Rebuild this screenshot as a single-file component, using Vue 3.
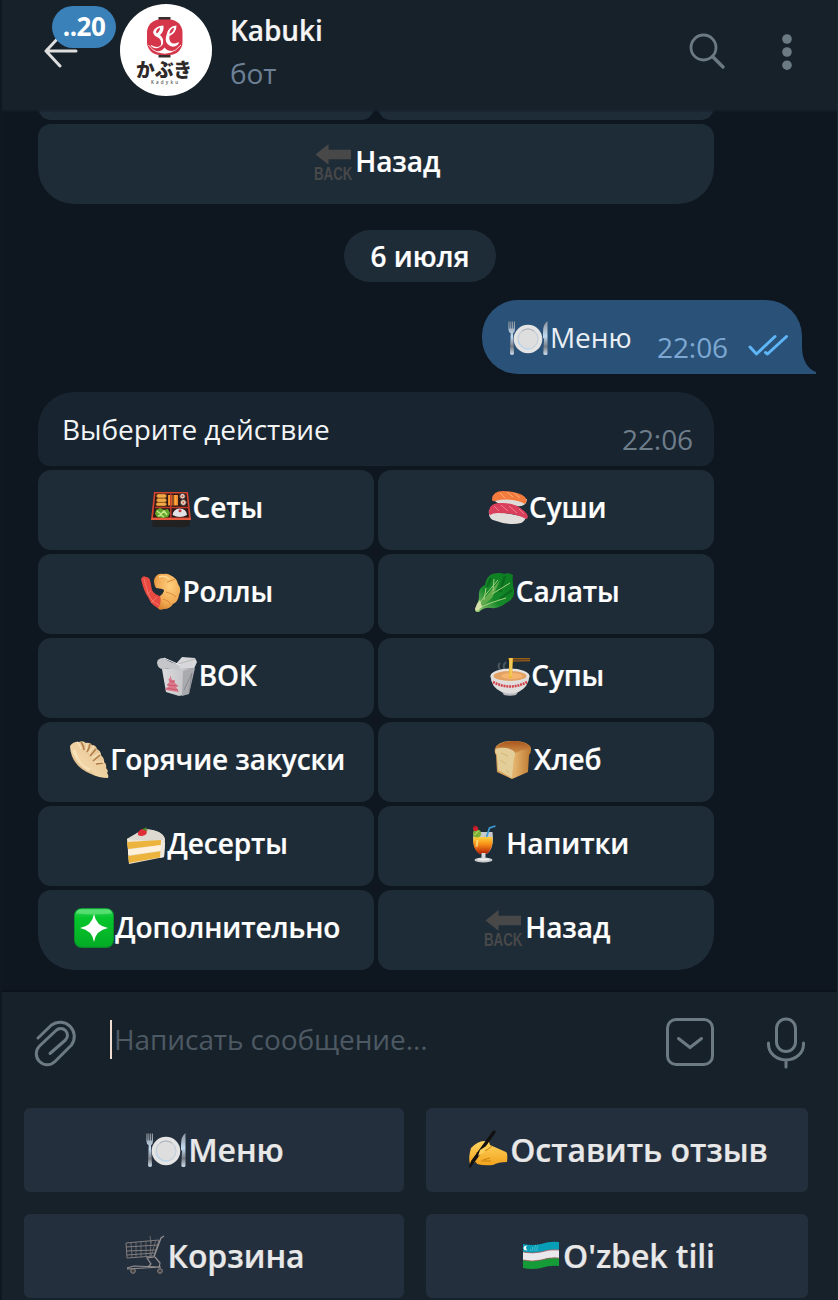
<script setup>
const menu = [
  { icon: 'bento', text: 'Сеты' },
  { icon: 'sushi', text: 'Суши' },
  { icon: 'shrimp', text: 'Роллы' },
  { icon: 'leaf', text: 'Салаты' },
  { icon: 'takeout', text: 'ВОК' },
  { icon: 'noodles', text: 'Супы' },
  { icon: 'dumpling', text: 'Горячие закуски' },
  { icon: 'bread', text: 'Хлеб' },
  { icon: 'cake', text: 'Десерты' },
  { icon: 'drink', text: 'Напитки' },
  { icon: 'sparkle', text: 'Дополнительно' },
  { icon: 'back', text: 'Назад' }
]
const keyboard = [
  { icon: 'plate', text: 'Меню' },
  { icon: 'writing', text: 'Оставить отзыв' },
  { icon: 'cart', text: 'Корзина' },
  { icon: 'flag', text: "O'zbek tili" }
]
</script>

<template>
  <div class="app">
    <svg class="sprite" aria-hidden="true">
      <defs>
        <linearGradient id="gGreen" x1="0" y1="0" x2="0" y2="1"><stop offset="0" stop-color="#35d35a" /><stop offset=".25" stop-color="#05c52c" /><stop offset="1" stop-color="#04ac25" /></linearGradient>
        <linearGradient id="gBread" x1="0" y1="0" x2="1" y2="0"><stop offset="0" stop-color="#d49a54" /><stop offset=".55" stop-color="#e3b26c" /><stop offset="1" stop-color="#bd7930" /></linearGradient>
        <linearGradient id="gCrust" x1="0" y1="0" x2="0" y2="1"><stop offset="0" stop-color="#a8561c" /><stop offset="1" stop-color="#cf8f4a" /></linearGradient>
        <linearGradient id="gDrink" x1="0" y1="0" x2="0" y2="1"><stop offset="0" stop-color="#ffd23c" /><stop offset=".45" stop-color="#f68b16" /><stop offset="1" stop-color="#b41e08" /></linearGradient>
        <linearGradient id="gHand" x1="0" y1="0" x2="0" y2="1"><stop offset="0" stop-color="#ffd560" /><stop offset="1" stop-color="#f2a31d" /></linearGradient>
        <linearGradient id="gLeaf" x1="1" y1="0" x2="0" y2="1"><stop offset="0" stop-color="#0a7a20" /><stop offset=".6" stop-color="#168a2a" /><stop offset="1" stop-color="#a5cf7c" /></linearGradient>
        <linearGradient id="gDump" x1="0" y1="1" x2="1" y2="0"><stop offset="0" stop-color="#b98850" /><stop offset=".4" stop-color="#f1d5a6" /><stop offset="1" stop-color="#e0bb8a" /></linearGradient>
        <linearGradient id="gSilver" x1="0" y1="0" x2="0" y2="1"><stop offset="0" stop-color="#8c9199" /><stop offset=".45" stop-color="#c3dbf0" /><stop offset=".75" stop-color="#777b82" /><stop offset="1" stop-color="#cfe0ee" /></linearGradient>
        <radialGradient id="gShrimp" cx=".6" cy=".35" r=".7"><stop offset="0" stop-color="#ffcf7e" /><stop offset=".7" stop-color="#f0a850" /><stop offset="1" stop-color="#d98630" /></radialGradient>
        <linearGradient id="gBox" x1="0" y1="0" x2="1" y2="0"><stop offset="0" stop-color="#dcdcde" /><stop offset=".68" stop-color="#c6c6c9" /><stop offset="1" stop-color="#97989b" /></linearGradient>
      </defs>

      <symbol id="plate" viewBox="0 0 40 40">
        <path d="M.4 4.500h1.100v7h.8v-7h1v7h.8v-7h1v7h.8v-7H7V12q0 3-2 4.300l1 20Q6 38 4 38t-2-1.700l.7-20Q.4 15 .4 12z" fill="url(#gSilver)" />
        <path d="M39.500 4Q35 7 35 16v5l1 .7-.7 14.800q0 1.500 2.200 1.500t2-1.500z" fill="url(#gSilver)" />
        <circle cx="20" cy="22" r="14.300" fill="#e4e4e4" />
        <circle cx="20" cy="22" r="10" fill="#dedede" stroke="#c3cedb" stroke-width="1.200" />
        <path d="M10.500 24a10 10 0 0 0 12 7.600" fill="none" stroke="#b8d9f7" stroke-width="1" />
        <path d="M14 14a10.500 10.500 0 0 1 12 0" fill="none" stroke="#aaa" stroke-width=".8" />
      </symbol>

      <symbol id="bento" viewBox="0 0 40 40">
        <path d="M1 31h38v7q-9 2-14 1H2q-1-3-1-8z" fill="#222122" />
        <path d="M3 4h34l3 28H0z" fill="#d4442e" />
        <path d="M4.500 5.500h31L38 29.500H2z" fill="#2c1918" />
        <g fill="#efa949" stroke="#925018" stroke-width=".6"><rect x="5.500" y="6" width="10" height="4" rx="2" /><rect x="5.500" y="10.300" width="10" height="4" rx="2" /><rect x="5" y="14.500" width="10.500" height="3.500" rx="1.700" /></g>
        <path d="M17 7h4.500v10.500H17zM22.500 7h4.500v10.500h-4.500z" fill="#f28a26" /><path d="M19 7v10M24.800 7v10" stroke="#ffc06a" stroke-width=".8" />
        <g fill="#e3d7cf" stroke="#4a3431" stroke-width="1"><circle cx="31.500" cy="8.200" r="2.800" /><circle cx="32.300" cy="14.500" r="3" /></g><g fill="#d45a36"><circle cx="31.500" cy="8.200" r="1" /><circle cx="32.300" cy="14.500" r="1" /></g>
        <path d="M4 19.500h34M19.800 6v24" stroke="#bd3b2b" stroke-width="1.500" />
        <path d="m5 22 4-2 4 2 4-1 2 4-2 4-5 1-6-1-2-3z" fill="#63a52d" /><path d="m6 23 4 3 3-3 3 4m-9 1 3-1 3 2" stroke="#c5e984" stroke-width="1.500" fill="none" />
        <path d="M21.500 27q1-6 7-6.500 7 0 7.500 6.500-7 4-14.500 0z" fill="#e2e2e6" /><circle cx="29" cy="22.800" r="1.500" fill="#c83b40" />
        <path d="M.3 31h39.400" stroke="#ef6245" stroke-width="1.300" />
      </symbol>

      <symbol id="sushi" viewBox="0 0 40 40">
        <path d="M5 9q2 9 18 8 12 3 15-2l1-4z" fill="#dfdcd7" />
        <path d="M4 11Q5 3 15 3q15 0 22 6 3 4 0 7-14-7-30-3-3 1-3-2z" fill="#f27b3d" />
        <path d="m12 5 5 5m2-6 6 5m1-4 6 5" stroke="#ffb175" stroke-width="1" />
        <path d="M1 22q-1 8 4 10 16 6 28 3 4-2 5-6z" fill="#e2dedb" />
        <path d="M1 26Q0 15 12 15q17-1 27 11 2 5-1 5-11-6-28-6-5 0-8 2z" fill="#da3f5b" />
        <path d="m6 18 5 5m2-6 7 6m1-5 8 7m2-4 5 5" stroke="#f27e92" stroke-width="1" />
      </symbol>

      <symbol id="shrimp" viewBox="0 0 40 40">
        <path d="M0 7Q2 3 5 5q3 0 4 3l2 10q2 5 11 7l-2 12q-9-2-13-12Q3 20 0 7z" fill="#e84a42" />
        <path d="m3 7 4 14q3 9 11 12M10 19l-4 3m10 3-6 6" fill="none" stroke="#f57466" stroke-width="1" />
        <path d="M15 4q3-3 7-2 4-1 7 1 7 3 8 9 4 5 1 11-1 7-6 9-3 5-9 5-5 2-6-1 4-5 2-12 3-2 4-5 1-2-8-3-4-7 0-12z" fill="url(#gShrimp)" />
        <path d="M25 20q6 1 10 5M26 10q4-1 8-3M22 27q6 1 8 6" fill="none" stroke="#d78838" stroke-width=".9" />
        <path d="M18 5q6-2 10 2" fill="none" stroke="#ffdb9c" stroke-width="1.500" />
      </symbol>

      <symbol id="leaf" viewBox="0 0 40 40">
        <path d="M1 37Q5 29 5 24q-1-8 6-11 1-8 7-11 9-2 12 0 5-2 9 1-1 8 1 15 1 9-8 13-7 6-15 5-7-1-12 4-4 1-4-3z" fill="url(#gLeaf)" />
        <path d="m31 4-5 16m12-2-12 9M13 15l4-9" stroke="#06591a" stroke-width="2.500" opacity=".55" />
        <path d="M2 38Q13 22 26 8l-8 18q-6 5-13 9z" fill="#62ab4c" />
        <path d="M2 37q8-14 22-29M5 36q10-5 27-10M10 28l2-12m7 3L20 7m-2 15 18-11" fill="none" stroke="#a4d07f" stroke-width="1" />
        <path d="M1 37q1-5 5-9l2 7q-3 2-3 3-3 2-4-1z" fill="#d5e0a8" />
      </symbol>

      <symbol id="takeout" viewBox="0 0 40 40">
        <path d="m18 9 7-8 13 1 2 4-4 9-15-1z" fill="#d8d8da" /><path d="m18 9 20-6" stroke="#aeb0b4" stroke-width=".8" />
        <path d="M5 13 37 12 31 38 22 40 9 36z" fill="url(#gBox)" />
        <path d="m26 15 12-3-6 26-7 2z" fill="#a9aaae" /><path d="m27 34 8-17-3 20" fill="none" stroke="#808287" stroke-width=".8" />
        <path d="M0 7Q0 2 7 2q6 5 15 6l2 7q-9-3-18-2-5 0-6-6z" fill="#c4c6c9" /><path d="m7 2 16 7" stroke="#eee" stroke-width="1" />
        <path d="m13 19 2 5h3l-1 2 4 4-2 1 3 5-14-2 4-4-2-1 3-4-2-1 2-2z" fill="#dd7688" /><path d="m10 29 11 1m-9-5 6 1m-9 6 12 2" stroke="#ba4e64" stroke-width=".7" />
      </symbol>

      <symbol id="noodles" viewBox="0 0 40 40">
        <path d="M10 14q-3-4 0-7m5 7q-3-4 1-8" fill="none" stroke="#65717a" stroke-width="2" opacity=".6" />
        <ellipse cx="20" cy="20" rx="19.500" ry="7.500" fill="#e6e2df" /><ellipse cx="20" cy="20" rx="16.500" ry="5" fill="#e2a263" /><ellipse cx="22" cy="20" rx="11" ry="3" fill="#f5b570" />
        <path d="M.5 20q19 12 39 0-1 11-11 16-8 5-17 0Q1 31 .5 20z" fill="#e0dddd" />
        <path d="M3 26q17 9 34 0" fill="none" stroke="#d3454d" stroke-width="2.600" stroke-dasharray="2 .8" />
        <path d="M12 36q8 3 16 0l-2 3q-6 1.500-12 0z" fill="#b9babd" />
        <path d="M18 2h22v1.500H18zM19 4.500l21-.5v1.300l-21 .5z" fill="#9b5d16" />
        <path d="M19 2h4l-1 20h-3z" fill="#edba3a" /><path d="M21 2v18" stroke="#ffe08a" stroke-width=".8" />
      </symbol>

      <symbol id="dumpling" viewBox="0 0 40 40">
        <path d="M1 6Q5 1 10 2q4-2 7 1 4-1 6 2 4 0 5 4 4 2 4 6 4 4 3 7 3 2 2 6 3 3 1 5 2 2 1 5-9 0-17-4Q2 26 1 6z" fill="url(#gDump)" />
        <path d="M12 2q3 4 3 8m6-6q-1 5-3 8m9-3-6 7m10-1-7 6m10 2-7 1" fill="none" stroke="#b07c48" stroke-width="1.500" />
        <path d="M8 2q3 3 4 7m6-6q0 5-1 7m8-4-5 7m11 0-8 5m12 4-9 0" fill="none" stroke="#f8e3bf" stroke-width="1.200" />
        <path d="M5 10q4 15 16 20" fill="none" stroke="#ffedc6" stroke-width="3" opacity=".6" />
      </symbol>

      <symbol id="bread" viewBox="0 0 40 40">
        <path d="M2 9Q4 1 21 1q18 1 17 9 0 3-2 5l-1 17-16 7-15-7-1-17Q1 12 2 9z" fill="url(#gBread)" />
        <path d="M2 8Q7 1 21 1q16 1 17 9-8-1-16 3Q12 6 2 8z" fill="url(#gCrust)" />
        <path d="M3 9q9-3 16 1 5 2 2 8l-2 20-14-8-1-15q-3-3-1-6z" fill="#e3ce9a" />
        <path d="m8 13 7 3m-8 4 6 4m0 6 3 3" stroke="#d5b674" stroke-width="1" />
      </symbol>

      <symbol id="cake" viewBox="0 0 40 40">
        <g transform="translate(0 2)">
          <path d="M1 13 18 3q19 1 21 10l-1 18-35 7z" fill="#efe7d5" />
          <path d="M1 13 18 3q19 1 20 11-14 2-37-1z" fill="#ddd9d0" />
          <path d="m1 16 34-2v5L2 23zM2 30l34-5v6L3 37z" fill="#edb43d" /><path d="m2 24 34-5v5L2 29z" fill="#fff1db" />
          <path d="M35 14q5 1 4 5l-1 12-4 1z" fill="#eee8dd" />
          <path d="M12 9q-1-4 4-6h4q2 4-1 6-4 2-7 0z" fill="#df2e35" /><path d="m17 3 4-2-1 2 2 2-5-1" fill="#508b25" />
        </g>
      </symbol>

      <symbol id="drink" viewBox="0 0 40 40">
        <g transform="translate(2.500 0)">
          <path d="M6 8h19q2 17-6 22h-7Q4 24 6 8z" fill="#c7c9cc" />
          <path d="M6 13h19q1 12-6 17h-7Q4 24 6 13z" fill="url(#gDrink)" />
          <path d="m10 16-1 7" stroke="#fff0a0" stroke-width="2" opacity=".65" />
          <path d="M14 29h4v6h-4z" fill="#d6d9dc" /><ellipse cx="16" cy="36" rx="9" ry="2.500" fill="#c7cacc" /><ellipse cx="16" cy="35.400" rx="6" ry="1.100" fill="#eee" />
          <path d="m19 13 3-9 6-2" fill="none" stroke="#3d9bd2" stroke-width="1.700" />
          <circle cx="9.500" cy="9.500" r="4" fill="#79af35" /><path d="m7 11 4-4" stroke="#cfe682" stroke-width="1" /><circle cx="8" cy="4.500" r="2.500" fill="#d81c2b" /><path d="m6 1 2 3" stroke="#8a1b22" />
        </g>
      </symbol>

      <symbol id="sparkle" viewBox="0 0 40 40">
        <rect width="40" height="40" rx="7.500" fill="#09872b" /><rect x=".8" y=".8" width="38.400" height="38" rx="7" fill="url(#gGreen)" />
        <path d="M6 1.500h28q3 0 4 4-18 2-36 0 1-4 4-4z" fill="#8df19d" opacity=".45" />
        <path d="M20 6q2 12 14 14-12 2-14 14-2-12-14-14 12-2 14-14z" fill="#fff" />
      </symbol>

      <symbol id="back" viewBox="0 0 40 40">
        <path d="M1.500 12.500 14.500 2v5.700H37v9.500H14.500v5.500z" fill="#484848" />
        <text x="0" y="38" textLength="38.500" lengthAdjust="spacingAndGlyphs" class="back-label">BACK</text>
      </symbol>

      <symbol id="writing" viewBox="0 0 40 40">
        <path d="M3 19q7-7 13-7l5 1 1 3 16 7q2 1 1 10-9 0-14 3-9 1-16-1l-1-2-6 2q-2-6 1-16z" fill="url(#gHand)" />
        <path d="M8 24q6-3 11-3l5-4M15 31l7-2m-9 3 10 0" fill="none" stroke="#c9800f" stroke-width="1" />
        <path d="m24 3 2-2 2 2L6 34l-4 5-1-1 2-6z" fill="#111" /><path d="m12 21 8-5-4 7-6 4z" fill="#ffd05b" />
      </symbol>

      <symbol id="cart" viewBox="0 0 40 40">
        <g fill="none" stroke="#827d7d" stroke-width="1">
          <path d="m1 8 33-3-5 16-27 2zM1 12l32-2M1 16l30-1M2 20l28-2" stroke-width="1" />
          <path d="m6 8 1 14M11 7v15M16 7v15M21 6v15M26 6l-1 15M31 5l-5 16" stroke-width=".7" />
          <path d="m39 1-3 2-7 19-7 1 4 6-3 3M30 22l5 6-1 5M2 34l34-2M2 33l7-2 25 1" stroke="#948f8f" stroke-width="1.200" />
          <path d="m25 1 1 7" stroke-width=".7" />
        </g>
        <circle cx="8" cy="36" r="2.300" fill="#453f3e" stroke="#8f8989" /><circle cx="35" cy="36" r="2.300" fill="#453f3e" stroke="#8f8989" />
      </symbol>

      <symbol id="flag" viewBox="0 0 40 40">
        <path d="M2 9q9 2 18 0 9-3 18-2v8q-9-1-18 2-9 2-18 0z" fill="#079eb8" />
        <path d="M2 17q9 2 18 0 9-3 18-2v8q-9-1-18 2-9 2-18 0z" fill="#e9e9ed" />
        <path d="M2 25q9 2 18 0 9-3 18-2v8q-9-1-18 2-9 2-18 0z" fill="#169b39" />
        <path d="M2 17q9 2 18 0 9-3 18-2M2 25q9 2 18 0 9-3 18-2" fill="none" stroke="#b55b62" stroke-width=".7" />
        <path d="M6.500 10.500q-3 2 0 5-4 0-4-2.500t4-2.500z" fill="#fff" /><path d="M9 15h8m-6-2h6m-3-2h3" stroke="#9fe4ee" stroke-width=".8" stroke-dasharray="1 1.200" />
      </symbol>
    </svg>

    <header class="header">
      <div class="back-nav">
        <svg class="arrow" viewBox="0 0 34 34"><path d="M32 17H2M16 2 2 17l14 15" fill="none" stroke="#dedede" stroke-width="3" stroke-linecap="round" stroke-linejoin="round" /></svg>
        <span class="badge">..20</span>
      </div>
      <svg class="avatar" viewBox="0 0 92 92">
        <circle cx="46" cy="46" r="46" fill="#fff" />
        <path d="M38.500 13h12v3h-12zM38.500 50.500h12v3h-12z" fill="#37302f" />
        <rect x="27" y="15.500" width="35.500" height="35.500" rx="13" fill="#d5364a" />
        <g fill="#fff">
          <path d="M43.500 21.500Q35 22 33 28q1 4 4 5 5 2 4 8-3 4-10 0-1 1 3 3 6 1 9-4 1-6-3-9 4-3 3.500-9.500zM40 23.500q0 4-3.500 6-1.500-4 3.500-6z" />
          <path d="M56.500 21.500Q48 22 46.500 31q-2 6 1 9 5 5 10 1 2-2 1-3-5 3-8 0-2-3-1-6 7-3 7-10.500zM54 23.500q0 4-4.500 6.500 0-5 4.500-6.500z" />
          <path d="M36 47.500q6 0 8.500-4 3 4 9 3.500-8 5-17.500.5z" />
        </g>
        <path d="M28.500 41q4 6 10 7.500M61 41q-5 6-11 7.500" fill="none" stroke="#fff" stroke-width=".8" />
        <text x="16" y="73" class="logo-kana" textLength="56" lengthAdjust="spacingAndGlyphs">かぶき</text>
        <text x="31" y="79.500" class="logo-latin" textLength="27">Kadyku</text>
      </svg>
      <div class="peer">
        <div class="name">Kabuki</div>
        <div class="status">бот</div>
      </div>
      <svg class="search" viewBox="0 0 38 38"><circle cx="15.500" cy="15.500" r="12.500" fill="none" stroke="#6c7a84" stroke-width="2.800" /><path d="M24.500 24.500 35 35" stroke="#6c7a84" stroke-width="3.400" stroke-linecap="round" /></svg>
      <svg class="dots" viewBox="0 0 10 38" fill="#6c7a84"><circle cx="5" cy="6" r="4.800" /><circle cx="5" cy="19" r="4.800" /><circle cx="5" cy="32.200" r="4.800" /></svg>
    </header>

    <main class="chat">
      <div class="cut-row"><span></span><span></span></div>
      <div class="btn wide">
        <svg class="emoji"><use href="#back" /></svg><span>Назад</span>
      </div>
      <div class="date">6 июля</div>
      <div class="out">
        <svg class="emoji"><use href="#plate" /></svg>
        <span class="out-text">Меню</span>
        <span class="out-time">22:06</span>
        <svg class="checks" viewBox="0 0 40 24"><path d="m2 13 6.500 7L27 2.500M17.500 18.500l2 1.500L38.500 2.500" fill="none" stroke="#5eb5f7" stroke-width="3" stroke-linecap="round" stroke-linejoin="round" /></svg>
        <svg class="tail" viewBox="0 0 14 26"><path d="M0 0q1 19 14 24v2H0z" fill="#2a5278" /></svg>
      </div>
      <div class="in"><span>Выберите действие</span><time>22:06</time></div>
      <div class="grid">
        <div v-for="b in menu" :key="b.icon" class="btn">
          <svg class="emoji"><use :href="'#' + b.icon" /></svg><span>{{ b.text }}</span>
        </div>
      </div>
      <i class="scroll"></i>
    </main>

    <footer class="panel">
      <div class="compose">
        <svg class="clip" viewBox="0 0 44 50"><path d="M4 20 17.500 7a14.300 14.300 0 0 1 20 20L21 43.500A10.800 10.800 0 0 1 5.500 28L22 12.500a6.600 6.600 0 0 1 9.500 9.500L16 35.500" fill="none" stroke="#6c7a84" stroke-width="3" stroke-linecap="round" stroke-linejoin="round" /></svg>
        <div class="field">Написать сообщение...</div>
        <svg class="kb-toggle" viewBox="0 0 48 48"><rect x="1.500" y="1.500" width="45" height="45" rx="8.500" fill="none" stroke="#6c7a84" stroke-width="3" /><path d="m12.500 20.500 11.500 9 11.500-9" fill="none" stroke="#6c7a84" stroke-width="3" stroke-linecap="round" /></svg>
        <svg class="mic" viewBox="0 0 40 52"><rect x="10.500" y="2" width="19" height="32.500" rx="9.500" fill="none" stroke="#6c7a84" stroke-width="3" /><path d="M2.500 26v1.500a17.500 15.500 0 0 0 35 0V26M20 43v7" fill="none" stroke="#6c7a84" stroke-width="3" stroke-linecap="round" /></svg>
      </div>
      <div class="keys">
        <div v-for="k in keyboard" :key="k.icon" class="key">
          <svg class="emoji"><use :href="'#' + k.icon" /></svg><span>{{ k.text }}</span>
        </div>
      </div>
    </footer>
  </div>
</template>

<style>
body { background: #0e161f; }
</style>

<style scoped>
* { box-sizing: border-box; }
.app { width: 838px; height: 1300px; display: flex; flex-direction: column; overflow: hidden; background: #0e161f; border-left: 2px solid #0f1820; border-right: 1px solid #1d2931; font: 400 28px/38px "Open Sans", "Noto Sans", sans-serif; color: #fff; letter-spacing: -.08px; }
.sprite { position: absolute; width: 0; height: 0; }
.emoji { width: 40px; height: 40px; flex: none; }
.back-label { font: 700 17.5px "Liberation Sans", sans-serif; fill: #484848; letter-spacing: 0; }

.header { flex: none; height: 110px; display: flex; background: #17212a; position: relative; z-index: 1; box-shadow: 0 2px 0 rgba(20, 32, 42, .6); }
.back-nav { position: relative; width: 118px; }
.arrow { display: block; width: 34px; height: 34px; margin: 34px 0 0 42px; }
.badge { position: absolute; left: 50px; top: 6px; width: 64px; height: 42px; border-radius: 21px; background: #3a80b9; font-size: 26px; font-weight: 700; letter-spacing: -.5px; line-height: 41px; text-align: center; }
.avatar { width: 92px; height: 92px; margin-top: 4px; }
.logo-kana { font: 900 19px "Noto Sans CJK JP", sans-serif; fill: #2e2928; }
.logo-latin { font: 600 4.500px "Open Sans", sans-serif; fill: #555; }
.peer { margin-left: 18px; padding-top: 11px; flex: 1; }
.name { font-weight: 600; color: #f5f5f5; }
.status { margin-top: 5px; color: #6d8096; }
.search { width: 38px; height: 38px; margin: 32px 0 0; }
.dots { width: 10px; height: 38px; margin: 33px 45px 0 56px; }

.chat { flex: 1; min-height: 0; position: relative; padding-left: 36px; box-shadow: inset 0 -2px 0 #0b121a; }
.scroll { position: absolute; left: -2px; top: 0; width: 2px; height: 136px; background: #222e3a; }
.cut-row { display: grid; grid-template: 10px / 336px 336px; gap: 4px; height: 10px; overflow: hidden; align-items: end; }
.cut-row span { height: 40px; border-radius: 13px; background: #1e2c38; }
.btn { height: 80px; border-radius: 13px; background: #1e2c38; display: flex; justify-content: center; align-items: center; padding: 0 0 4px 2px; font-weight: 600; }
.btn span, .key span, .name, .date { -webkit-text-stroke: .2px currentColor; }
.btn span { margin: -2px 0 0 1.500px; }
.wide { width: 676px; margin-top: 4px; border-radius: 13px 13px 36px 36px; }
.date { width: 152px; height: 52px; margin: 26px 0 0 306px; border-radius: 26px; background: #1e2c38; text-align: center; font-weight: 600; line-height: 52px; }
.out { position: relative; width: 320px; height: 74px; margin: 18px 0 0 444px; border-radius: 36px 36px 0 36px; background: #2a5278; display: flex; align-items: flex-start; padding: 17px 14px 0 26px; }
.out-text { color: #e8eef4; margin: 1px 0 0 2px; }
.out-time { color: #7da8d3; margin: 11px 0 0 auto; }
.checks { width: 40px; height: 24px; margin: 17px 0 0 20px; }
.tail { position: absolute; left: 320px; bottom: 0; width: 14px; height: 26px; }
.in { width: 676px; height: 74px; margin-top: 18px; border-radius: 36px 36px 12px 12px; background: #182430; display: flex; justify-content: space-between; padding: 18px 21px 0 24px; color: #f2f4f5; }
.in time { color: #6d7d89; margin-top: 10px; }
.grid { display: grid; grid-template-columns: 336px 336px; gap: 4px; margin-top: 4px; }
.grid .btn:nth-last-child(2) { border-bottom-left-radius: 36px; }
.grid .btn:last-child { border-bottom-right-radius: 36px; }

.panel { flex: none; height: 308px; background: #17212a; }
.compose { height: 116px; display: flex; align-items: flex-start; }
.clip { width: 44px; height: 50px; margin: 26px 0 0 32px; }
.field { flex: 1; margin: 28px 0 0 32px; height: 39px; border-left: 2px solid #f0ddd0; padding-left: 2px; color: #4d5963; line-height: 38px; }
.kb-toggle { width: 48px; height: 48px; margin-top: 26px; }
.mic { width: 40px; height: 52px; margin: 25px 31px 0 52px; }
.keys { display: grid; grid-template-columns: 380px 382px; gap: 22px; padding-left: 22px; }
.key { height: 84px; border-radius: 6px; background: #242f3d; display: flex; align-items: center; justify-content: center; padding: 0 0 2px 2px; font-size: 32px; font-weight: 600; color: #e8e8e8; }
.key span { margin: 2px 0 0 2px; }
</style>
